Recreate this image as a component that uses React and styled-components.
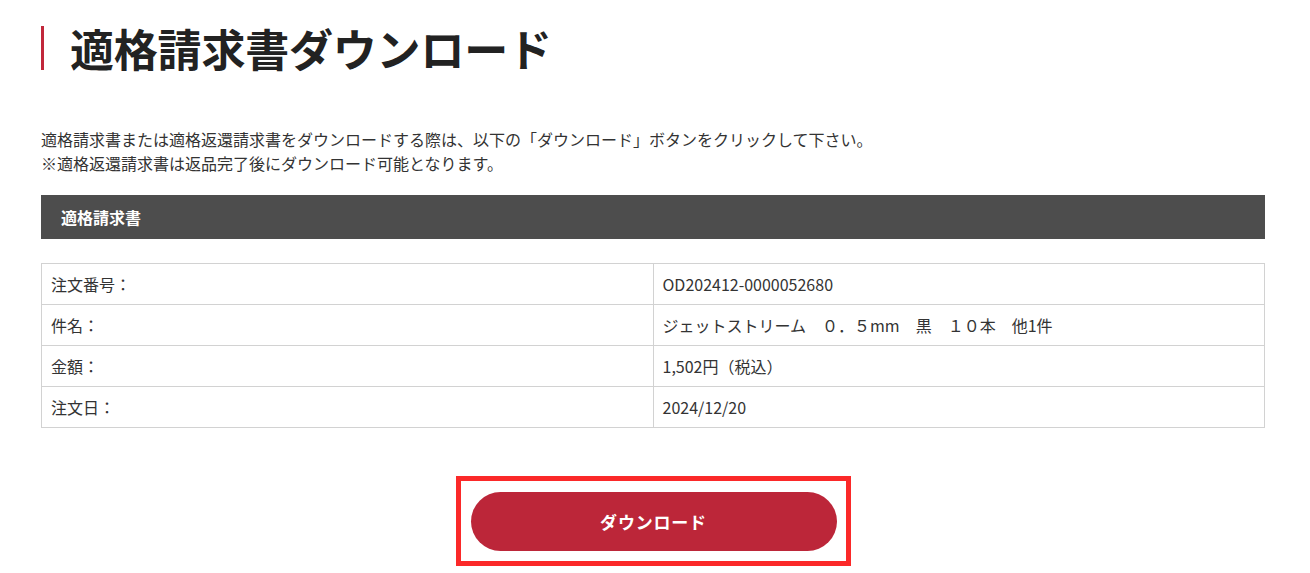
import React from "react";
import styled, { createGlobalStyle } from "styled-components";

const Global = createGlobalStyle`
  html, body { margin: 0; padding: 0; background: #fff; }
  body {
    font-family: "Noto Sans CJK JP", "Noto Sans", sans-serif;
    color: #333;
  }
`;

const Page = styled.main`
  width: 1224px;
  padding: 26px 0 0 41px;
`;

const Title = styled.h1`
  margin: 0;
  border-left: 3px solid #c1283b;
  padding-left: 26px;
  font-size: 44px;
  line-height: 44px;
  font-weight: 700;
  color: #222;
  letter-spacing: -0.2px;
`;

const Lead = styled.p`
  margin: 57px 0 0;
  font-size: 16px;
  line-height: 24px;
  color: #333;
`;

const SectionBar = styled.h2`
  margin: 20px 0 0;
  height: 44px;
  display: flex;
  align-items: center;
  padding-left: 20px;
  background: #4d4d4d;
  color: #fff;
  font-size: 16px;
  font-weight: 700;
`;

const Table = styled.table`
  margin-top: 24px;
  width: 100%;
  border-collapse: collapse;
  table-layout: fixed;
`;

const Cell = styled.td`
  border: 1px solid #d2d2d2;
  height: 40px;
  padding: 0 0 0 9px;
  font-size: 16px;
  color: #333;
  vertical-align: middle;
`;

const ButtonArea = styled.div`
  display: flex;
  justify-content: center;
  margin-top: 48px;
`;

const Highlight = styled.div`
  border: 5px solid #fb2929;
  padding: 11px 9px 10px 10px;
`;

const DownloadButton = styled.button`
  width: 366px;
  height: 59px;
  border: none;
  border-radius: 30px;
  background: #bc2639;
  color: #fff;
  font-family: inherit;
  font-size: 17px;
  font-weight: 700;
  letter-spacing: 0.8px;
  cursor: pointer;
  display: block;
`;

const rows = [
  ["注文番号：", "OD202412-0000052680"],
  ["件名：", "ジェットストリーム　０．５mm　黒　１０本　他1件"],
  ["金額：", "1,502円（税込）"],
  ["注文日：", "2024/12/20"],
];

export default function App() {
  return (
    <>
      <Global />
      <Page>
        <Title>適格請求書ダウンロード</Title>
        <Lead>
          適格請求書または適格返還請求書をダウンロードする際は、以下の「ダウンロード」ボタンをクリックして下さい。
          <br />
          ※適格返還請求書は返品完了後にダウンロード可能となります。
        </Lead>
        <SectionBar>適格請求書</SectionBar>
        <Table>
          <tbody>
            {rows.map(([k, v]) => (
              <tr key={k}>
                <Cell>{k}</Cell>
                <Cell>{v}</Cell>
              </tr>
            ))}
          </tbody>
        </Table>
        <ButtonArea>
          <Highlight>
            <DownloadButton>ダウンロード</DownloadButton>
          </Highlight>
        </ButtonArea>
      </Page>
    </>
  );
}
